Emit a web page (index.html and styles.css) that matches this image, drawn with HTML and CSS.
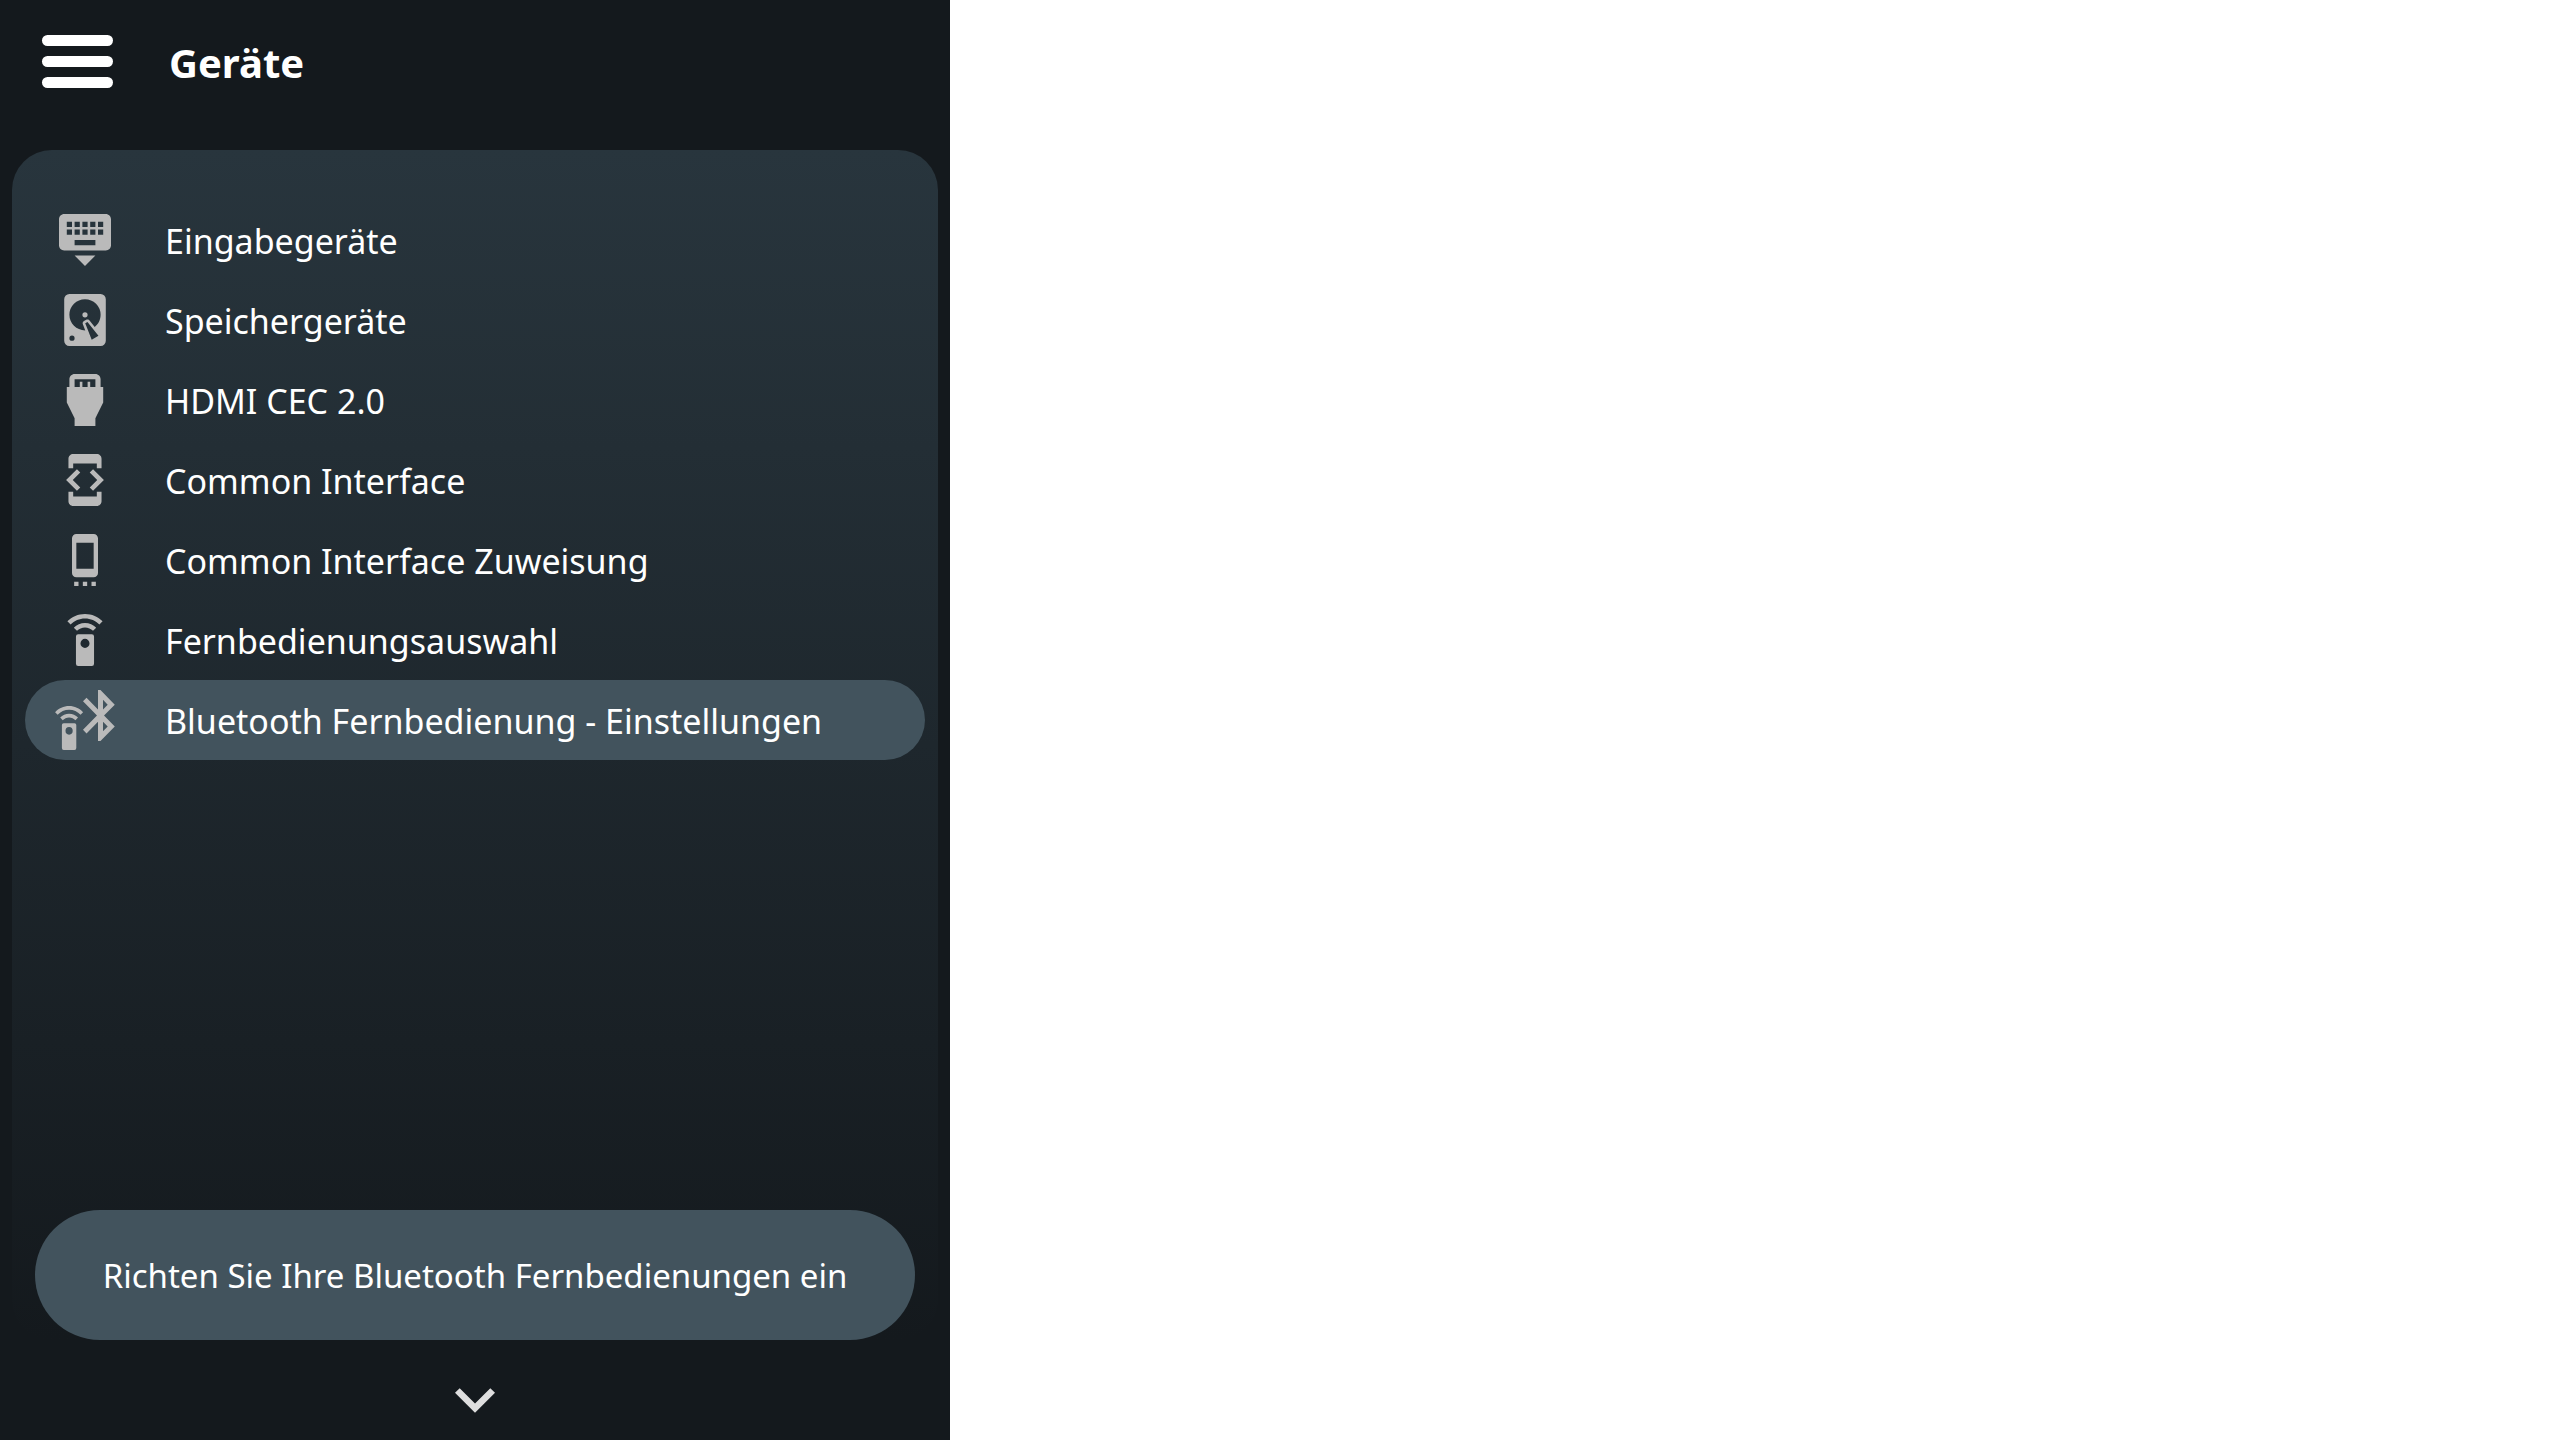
FILE: index.html
```html
<!DOCTYPE html>
<html lang="de">
<head>
    <meta charset="UTF-8">
    <meta name="viewport" content="width=device-width, initial-scale=1.0">
    <title>Geräte</title>
    <link rel="stylesheet" href="styles.css">
</head>
<body>
    <div class="sidebar">
        <header class="header">
            <button class="menu-btn" type="button" aria-label="Menü">
                <span></span>
                <span></span>
                <span></span>
            </button>
            <h1>Geräte</h1>
        </header>

        <main class="panel">
            <nav class="menu">
                <a class="item" href="#eingabe">
                    <svg class="icon" viewBox="2 3 20 20"><path d="M20 3H4c-1.100 0-1.990.9-1.990 2L2 15c0 1.100.9 2 2 2h16c1.100 0 2-.9 2-2V5c0-1.100-.9-2-2-2zm-9 3h2v2h-2V6zm0 3h2v2h-2V9zM8 6h2v2H8V6zm0 3h2v2H8V9zm-1 2H5V9h2v2zm0-3H5V6h2v2zm9 7H8v-2h8v2zm0-4h-2V9h2v2zm0-3h-2V6h2v2zm3 3h-2V9h2v2zm0-3h-2V6h2v2zm-7 15l4-4H8l4 4z"/></svg>
                    <span>Eingabegeräte</span>
                </a>
                <a class="item" href="#speicher">
                    <svg class="icon" viewBox="2 2 20 20"><path d="M6,2H18A2,2 0 0,1 20,4V20A2,2 0 0,1 18,22H6A2,2 0 0,1 4,20V4A2,2 0 0,1 6,2M12,4A6,6 0 0,0 6,10C6,13.31 8.69,16 12.1,16L11.22,13.77C10.95,13.29 11.11,12.68 11.59,12.4L12.45,11.9C12.93,11.63 13.54,11.79 13.82,12.27L15.74,14.69C17.12,13.59 18,11.9 18,10A6,6 0 0,0 12,4M12,9A1,1 0 0,1 13,10A1,1 0 0,1 12,11A1,1 0 0,1 11,10A1,1 0 0,1 12,9M7,18A1,1 0 0,0 6,19A1,1 0 0,0 7,20A1,1 0 0,0 8,19A1,1 0 0,0 7,18M12.09,13.27L14.58,19.58L17.17,18.08L12.95,12.77L12.09,13.27Z"/></svg>
                    <span>Speichergeräte</span>
                </a>
                <a class="item" href="#hdmi">
                    <svg class="icon" viewBox="2 2 20 20"><path d="M18 7V4c0-1.100-.9-2-2-2H8c-1.100 0-2 .9-2 2v3H5v6l3 6v3h8v-3l3-6V7h-1zM8 4h8v3h-2V5h-1v2h-2V5h-1v2H8V4z"/></svg>
                    <span>HDMI CEC 2.0</span>
                </a>
                <a class="item" href="#ci">
                    <svg class="icon" viewBox="1 1 22 22"><path d="M7 5h10v2h2V3c0-1.100-.9-1.990-2-1.990L7 1c-1.100 0-2 .9-2 2v4h2V5zm8.410 11.590L20 12l-4.590-4.590L14 8.830 17.170 12 14 15.170l1.410 1.420zM10 15.170L6.830 12 10 8.830 8.590 7.410 4 12l4.590 4.590L10 15.170zM17 19H7v-2H5v4c0 1.100.9 2 2 2h10c1.100 0 2-.9 2-2v-4h-2v2z"/></svg>
                    <span>Common Interface</span>
                </a>
                <a class="item" href="#ci-zuweisung">
                    <svg class="icon" viewBox="0 0 24 24"><path d="M7 24h2v-2H7v2zm4 0h2v-2h-2v2zm4 0h2v-2h-2v2zM16 .01L8 0C6.900 0 6 .9 6 2v16c0 1.100.9 2 2 2h8c1.100 0 2-.9 2-2V2c0-1.100-.9-1.990-2-1.990zM16 16H8V4h8v12z"/></svg>
                    <span>Common Interface Zuweisung</span>
                </a>
                <a class="item" href="#fernbedienung">
                    <svg class="icon" viewBox="0.5 0 23 23"><path d="M12,0C8.96,0 6.21,1.23 4.22,3.22L5.63,4.63C7.26,3 9.5,2 12,2C14.5,2 16.74,3 18.36,4.64L19.77,3.23C17.79,1.23 15.04,0 12,0M7.05,6.05L8.46,7.46C9.37,6.56 10.62,6 12,6C13.38,6 14.63,6.56 15.54,7.46L16.95,6.05C15.68,4.78 13.93,4 12,4C10.07,4 8.32,4.78 7.05,6.05M12,15A2,2 0 0,1 10,13A2,2 0 0,1 12,11A2,2 0 0,1 14,13A2,2 0 0,1 12,15M15,9H9A1,1 0 0,0 8,10V22A1,1 0 0,0 9,23H15A1,1 0 0,0 16,22V10A1,1 0 0,0 15,9Z"/></svg>
                    <span>Fernbedienungsauswahl</span>
                </a>
                <a class="item active" href="#bluetooth">
                    <svg class="icon large" viewBox="0 0 60 60">
                        <path transform="translate(-7.500 16) scale(1.800 1.910)" d="M12,0C8.96,0 6.21,1.23 4.22,3.22L5.63,4.63C7.26,3 9.5,2 12,2C14.5,2 16.74,3 18.36,4.64L19.77,3.23C17.79,1.23 15.04,0 12,0M7.05,6.05L8.46,7.46C9.37,6.56 10.62,6 12,6C13.38,6 14.63,6.56 15.54,7.46L16.95,6.05C15.68,4.78 13.93,4 12,4C10.07,4 8.32,4.78 7.05,6.05M12,15A2,2 0 0,1 10,13A2,2 0 0,1 12,11A2,2 0 0,1 14,13A2,2 0 0,1 12,15M15,9H9A1,1 0 0,0 8,10V22A1,1 0 0,0 9,23H15A1,1 0 0,0 16,22V10A1,1 0 0,0 15,9Z"/>
                        <path transform="translate(15.500 -5) scale(2.500 2.550)" d="M17.710 7.710L12 2h-1v7.590L6.410 5 5 6.410 10.590 12 5 17.590 6.410 19 11 14.410V22h1l5.710-5.710-4.300-4.290 4.300-4.290zM13 5.830l1.880 1.880L13 9.590V5.830zm1.880 10.460L13 18.170v-3.760l1.880 1.880z"/>
                    </svg>
                    <span>Bluetooth Fernbedienung - Einstellungen</span>
                </a>
            </nav>

            <p class="info">Richten Sie Ihre Bluetooth Fernbedienungen ein</p>
        </main>

        <footer class="footer">
            <button class="more-btn" type="button" aria-label="Weiter">
                <svg viewBox="6 8.590 12 7.410"><path d="M16.590 8.590L12 13.170 7.410 8.590 6 10l6 6 6-6z"/></svg>
            </button>
        </footer>
    </div>
</body>
</html>
```
FILE: styles.css
```css
* {
    box-sizing: border-box;
    margin: 0;
    padding: 0;
    font-family: "Noto Sans", sans-serif;
}

body {
    background: #fff;
    color: #fff;
}

button {
    border: none;
    background: none;
    cursor: pointer;
}

.sidebar {
    display: flex;
    flex-direction: column;
    width: 100%;
    max-width: 950px;
    min-height: 100vh;
    background: #14191d;
}

/* Kopfzeile */
.header {
    display: flex;
    align-items: center;
    gap: 56px;
    padding: 29px 42px 57px;
}

.header h1 {
    padding-top: 4px;
    font-size: 40px;
    line-height: 60px;
}

.menu-btn {
    display: flex;
    flex-direction: column;
    gap: 10px;
    width: 71px;
}

.menu-btn span {
    height: 11px;
    border-radius: 6px;
    background: #fff;
}

/* Liste */
.panel {
    flex: 1;
    display: flex;
    flex-direction: column;
    justify-content: space-between;
    margin: 0 12px;
    padding-top: 50px;
    border-radius: 40px;
    background: linear-gradient(#28353d, #14191d);
}

.menu {
    padding: 0 13px;
}

.item {
    display: flex;
    align-items: center;
    gap: 50px;
    height: 80px;
    padding: 0 30px;
    border-radius: 40px;
    color: #fff;
    font-size: 34px;
    text-decoration: none;
}

.item span {
    padding-top: 2px;
}

.item.active {
    background: #42535d;
}

.icon {
    width: 52px;
    height: 52px;
    margin: 0 4px;
    fill: #bababa;
}

.icon.large {
    width: 60px;
    height: 60px;
    margin: 0;
}

.info {
    margin: 0 23px;
    padding: 41px 40px 39px;
    border-radius: 65px;
    background: #42535d;
    font-size: 33px;
    line-height: 50px;
    text-align: center;
}

/* Pfeil unten */
.footer {
    display: flex;
    justify-content: center;
    padding: 48px 0 27px;
}

.more-btn svg {
    display: block;
    width: 40px;
    height: 25px;
    fill: #dedede;
}
```
